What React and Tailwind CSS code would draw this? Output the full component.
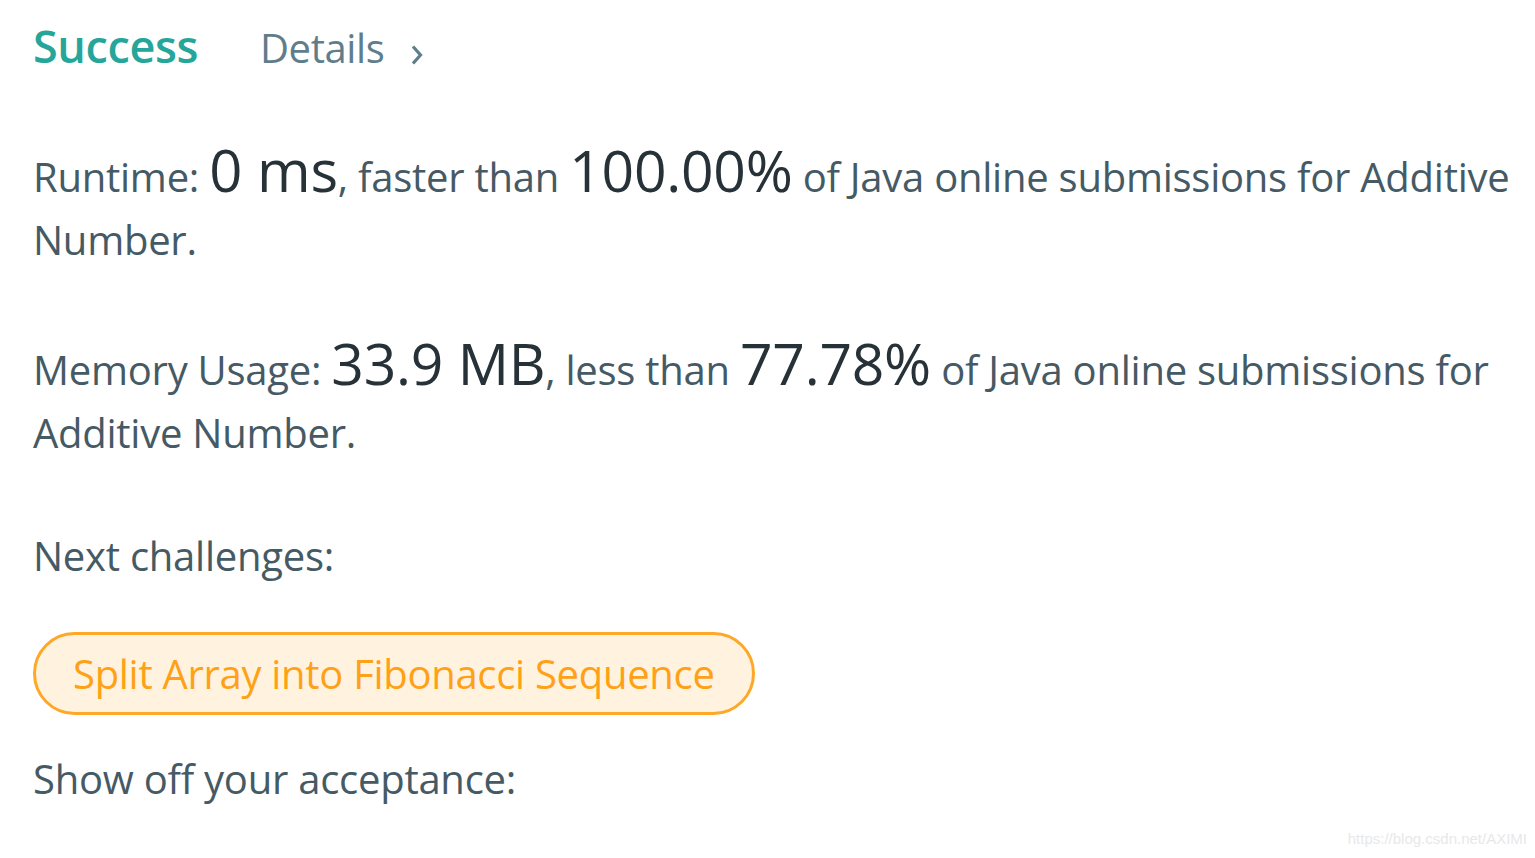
export default function App() {
  return (
    <div
      className="w-[1535px] h-[858px] bg-white relative overflow-hidden pl-[33px] text-[#455a64]"
      style={{ fontFamily: '"Open Sans", "Noto Sans", sans-serif' }}
    >
      <div className="flex items-baseline h-[96px] pt-[12px]">
        <span className="text-[45px] font-semibold text-[#26a69a] tracking-[-0.4px]">Success</span>
        <span className="ml-[62px] text-[40px] text-[#607d8b] tracking-[-0.4px]">Details</span>
        <svg className="ml-[26px] w-[14px] h-[22px] self-center mt-[2px]" viewBox="0 0 14 22">
          <path d="M3 2.5 L10.5 11 L3 19.5" fill="none" stroke="#607d8b" strokeWidth="3.2" />
        </svg>
      </div>

      <p className="mt-[42px] text-[40px] leading-[63px] tracking-[-0.25px]">
        Runtime: <span className="text-[58px] text-[#263238]">0 ms</span>, faster than{" "}
        <span className="text-[57px] text-[#263238]">100.00%</span> of Java online submissions for Additive
        <br />
        Number.
      </p>

      <p className="mt-[61px] text-[40px] leading-[63px] tracking-[-0.25px]">
        Memory Usage: <span className="text-[57px] text-[#263238]">33.9 MB</span>, less than{" "}
        <span className="text-[57px] text-[#263238]">77.78%</span> of Java online submissions for
        <br />
        Additive Number.
      </p>

      <p className="mt-[60px] text-[40px] leading-[63px] tracking-[-0.25px]">Next challenges:</p>

      <div className="mt-[45px]">
        <span className="inline-flex items-center h-[83px] px-[37px] rounded-full border-[3px] border-[#ffa726] bg-[#fff3e0] text-[#ffa116] text-[40px] tracking-[-0.3px]">
          Split Array into Fibonacci Sequence
        </span>
      </div>

      <p className="mt-[32px] text-[40px] leading-[63px] tracking-[-0.25px]">Show off your acceptance:</p>

      <div
        className="absolute right-[8px] bottom-[8px] text-[15px] text-[#e8e8e8]"
        style={{ fontFamily: '"Liberation Sans", Arial, sans-serif' }}
      >
        https://blog.csdn.net/AXIMI
      </div>
    </div>
  );
}
